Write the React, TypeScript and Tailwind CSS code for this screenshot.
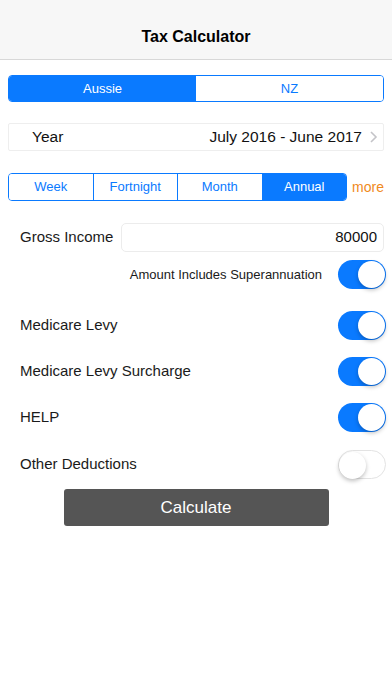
import React from 'react';

const font = { fontFamily: '"Liberation Sans", Arial, sans-serif' };

function Toggle({ on }: { on: boolean }) {
  return (
    <div
      className={
        'relative w-[48px] h-[29px] rounded-full shrink-0 ' +
        (on ? 'bg-[#0a7aff]' : 'bg-white border border-[#e3e3e3]')
      }
    >
      <div
        className={
          'absolute top-[1px] w-[27px] h-[27px] rounded-full bg-white shadow-[0_2px_4px_rgba(0,0,0,0.25)] ' +
          (on ? 'right-[1px]' : 'left-0 top-0')
        }
      />
    </div>
  );
}

function SwitchRow({ label, on }: { label: string; on: boolean }) {
  return (
    <div className="flex items-center justify-between h-[46.3px] pl-[20px] pr-[6px]">
      <span className="text-[15px] text-[#1a1a1a]">{label}</span>
      <Toggle on={on} />
    </div>
  );
}

export default function App() {
  const periods = ['Week', 'Fortnight', 'Month', 'Annual'];
  return (
    <div className="w-[392px] h-[696px] bg-white" style={font}>
      <div className="h-[60px] bg-[#f7f7f7] border-b border-[#d8d8d8] flex items-end justify-center pb-[10px]">
        <span className="text-[16px] font-bold text-black">Tax Calculator</span>
      </div>

      <div className="px-[8px] pt-[15px]">
        <div className="flex h-[27px] rounded-[4px] border border-[#0a7aff] overflow-hidden text-[13px]">
          <div className="flex-1 bg-[#0a7aff] text-white flex items-center justify-center">Aussie</div>
          <div className="flex-1 bg-white text-[#0a7aff] flex items-center justify-center">NZ</div>
        </div>

        <div className="mt-[21px] h-[28px] border border-[#eeeeee] rounded-[2px] flex items-center pl-[23px] pr-[5px]">
          <span className="text-[15.5px] text-[#111]">Year</span>
          <span className="ml-auto text-[15.5px] text-[#111]">July 2016 - June 2017</span>
          <svg width="10" height="14" viewBox="0 0 10 14" className="ml-[6px]">
            <path d="M3 2l5 5-5 5" fill="none" stroke="#c4c4c8" strokeWidth="1.6" />
          </svg>
        </div>

        <div className="mt-[22px] flex items-center">
          <div className="flex w-[339px] h-[28px] rounded-[4px] border border-[#0a7aff] overflow-hidden text-[13px]">
            {periods.map((p, i) => (
              <div
                key={p}
                className={
                  'flex-1 flex items-center justify-center ' +
                  (i > 0 ? 'border-l border-[#0a7aff] ' : '') +
                  (p === 'Annual' ? 'bg-[#0a7aff] text-white' : 'bg-white text-[#0a7aff]')
                }
              >
                {p}
              </div>
            ))}
          </div>
          <span className="ml-auto text-[14px] text-[#f08a1c]">more</span>
        </div>
      </div>

      <div className="mt-[22px] flex items-center pl-[20px] pr-[8px]">
        <span className="text-[15px] text-[#1a1a1a] w-[101px]">Gross Income</span>
        <div className="flex-1 h-[29px] border border-[#ececec] rounded-[5px] flex items-center justify-end pr-[6px] text-[15px] text-[#111]">
          80000
        </div>
      </div>

      <div className="mt-[8px] flex items-center justify-end pr-[6px]">
        <span className="text-[13px] text-[#1a1a1a] mr-[16px]">Amount Includes Superannuation</span>
        <Toggle on />
      </div>

      <div className="mt-[13px]">
        <SwitchRow label="Medicare Levy" on />
        <SwitchRow label="Medicare Levy Surcharge" on />
        <SwitchRow label="HELP" on />
        <SwitchRow label="Other Deductions" on={false} />
      </div>

      <div className="flex justify-center mt-[2px]">
        <div className="w-[265px] h-[37px] bg-[#555555] rounded-[3px] flex items-center justify-center text-white text-[17px]">
          Calculate
        </div>
      </div>
    </div>
  );
}
